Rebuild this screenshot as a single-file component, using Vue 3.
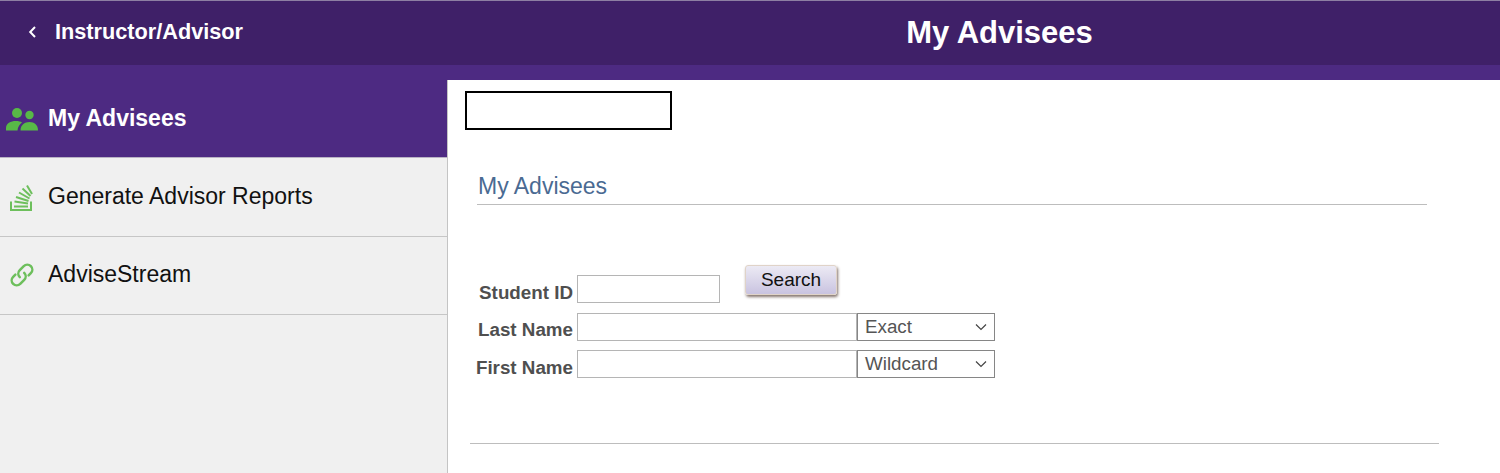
<script setup>
const navItems = [
  { label: 'My Advisees', icon: 'people', active: true },
  { label: 'Generate Advisor Reports', icon: 'stack', active: false },
  { label: 'AdviseStream', icon: 'link', active: false }
]
</script>

<template>
  <div class="page">
    <header class="topbar">
      <div class="back">
        <svg class="chev" viewBox="0 0 10 14" width="10" height="14"><path d="M8 2 L3.200 7 L8 12" fill="none" stroke="#fff" stroke-width="2"/></svg>
        <span>Instructor/Advisor</span>
      </div>
      <h1 class="title">My Advisees</h1>
    </header>
    <div class="body">
      <nav class="side">
        <div v-for="item in navItems" :key="item.label" class="nav-item" :class="{ active: item.active }">
          <svg v-if="item.icon === 'people'" class="ico" viewBox="0 0 32 26" width="32" height="26">
            <circle cx="11" cy="7" r="5" fill="#58b947"/>
            <circle cx="23.500" cy="9" r="4.200" fill="#58b947"/>
            <path d="M0 24.500 V22 C0 17.500 4.500 15 10 15 C12.500 15 14.500 15.500 16 16.500 C13.500 18.500 11.800 21 11.500 24.500 Z" fill="#58b947"/>
            <path d="M14.500 24.500 C14.500 19 18.500 16 23.500 16 C28.500 16 32 19 32 24.500 Z" fill="#58b947"/>
          </svg>
          <svg v-else-if="item.icon === 'stack'" class="ico" viewBox="0 0 32 28" width="32" height="28">
            <g fill="none" stroke="#6dbf5c" stroke-width="2">
              <path d="M3 18.500 V27 H23 V18.500"/>
              <path d="M6 23.500 H20"/>
              <path d="M6.500 18.500 L20 20.500"/>
              <path d="M8 14 L20.500 18"/>
              <path d="M11 9.500 L21.500 15.500"/>
              <path d="M14.500 5.500 L22.500 13"/>
              <path d="M19 2.500 L24 11"/>
            </g>
          </svg>
          <svg v-else class="ico" viewBox="0.8 0.8 25.6 22.4" width="32" height="28">
            <g transform="rotate(-45 12 12)" fill="none" stroke="#6dbf5c" stroke-width="2" stroke-linecap="round">
              <path d="M9.500 12 A4 4 0 0 1 13.500 8 H18 A4 4 0 0 1 18 16 H15.500"/>
              <path d="M14.500 12 A4 4 0 0 1 10.500 16 H6 A4 4 0 0 1 6 8 H8.500"/>
            </g>
          </svg>
          <span>{{ item.label }}</span>
        </div>
      </nav>
      <main class="content">
        <div class="band"></div>
        <div class="inner">
          <div class="redacted"></div>
          <div class="section-head">My Advisees</div>
          <form class="form" @submit.prevent>
            <div class="row first">
              <label>Student ID</label>
              <input class="input short" type="text" />
              <button class="search" type="button">Search</button>
            </div>
            <div class="row">
              <label>Last Name</label>
              <input class="input long" type="text" />
              <div class="sel"><span>Exact</span><svg viewBox="0 0 12 8" width="12" height="8"><path d="M1 1.500 L6 6.500 L11 1.500" fill="none" stroke="#444" stroke-width="1.200"/></svg></div>
            </div>
            <div class="row">
              <label>First Name</label>
              <input class="input long" type="text" />
              <div class="sel"><span>Wildcard</span><svg viewBox="0 0 12 8" width="12" height="8"><path d="M1 1.500 L6 6.500 L11 1.500" fill="none" stroke="#444" stroke-width="1.200"/></svg></div>
            </div>
          </form>
          <div class="sep"></div>
        </div>
      </main>
    </div>
  </div>
</template>

<style>
html, body { margin: 0; background: #fff; overflow: hidden; }
</style>

<style scoped>
.page {
  width: 1500px;
  height: 473px;
  overflow: hidden;
  font-family: "Liberation Sans", Arial, sans-serif;
  display: flex;
  flex-direction: column;
}
.topbar {
  height: 64px;
  flex: none;
  background: #3f2068;
  border-top: 1px solid #8d7fa3;
  display: flex;
  align-items: center;
  color: #fff;
}
.back {
  width: 447px;
  flex: none;
  padding: 0 0 2px 27px;
  box-sizing: border-box;
  display: flex;
  align-items: center;
  gap: 18px;
  font-size: 21.700px;
  font-weight: 700;
}
.title {
  margin: 0;
  flex: 1;
  text-align: center;
  font-size: 31px;
  font-weight: 700;
  transform: translateX(26px);
}
.body { flex: 1; display: flex; min-height: 0; }
.side {
  width: 447px;
  flex: none;
  background: #f0f0f0;
  display: flex;
  flex-direction: column;
}
.nav-item {
  height: 75px;
  padding-bottom: 2px;
  flex: none;
  border-bottom: 1px solid #c6c6c6;
  display: flex;
  align-items: center;
  padding-left: 8px;
  gap: 8px;
  font-size: 23px;
  color: #111;
}
.nav-item.active + .nav-item {
  height: 77px;
  padding-bottom: 1px;
}
.nav-item.active {
  height: 77px;
  padding-top: 15px;
  padding-bottom: 0;
  background: #4d2a82;
  color: #fff;
  font-weight: 700;
  padding-left: 6px;
  gap: 10px;
  border-bottom: 1px solid #b9b3c4;
}
.ico { flex: none; }
.content {
  flex: 1;
  display: flex;
  flex-direction: column;
  min-width: 0;
}
.band { height: 15px; background: #4d2a82; flex: none; }
.inner {
  flex: 1;
  background: #fff;
  border-left: 1px solid #c4c4c4;
  padding-top: 11px;
}
.redacted {
  width: 207px;
  height: 39px;
  box-sizing: border-box;
  border: 2px solid #000;
  margin-left: 17px;
}
.section-head {
  margin: 43px 0 0 29px;
  padding-left: 1px;
  width: 949px;
  height: 31px;
  border-bottom: 1px solid #bdbdbd;
  color: #4a6a92;
  font-size: 23px;
  line-height: 26px;
}
.form {
  margin-top: 70px;
  display: flex;
  flex-direction: column;
  gap: 9px;
}
.row {
  display: flex;
  align-items: flex-start;
  height: 28px;
}
.row label {
  width: 125px;
  flex: none;
  text-align: right;
  font-size: 18.800px;
  font-weight: 700;
  color: #4f4f4f;
  line-height: 34px;
  white-space: nowrap;
}
.row.first label { line-height: 35px; }
.row:last-child label { line-height: 35px; }
.row.first { height: 29px; }
.input {
  box-sizing: border-box;
  height: 28px;
  margin: 0 0 0 4px;
  border: 1px solid #b5b5b5;
  background: #fff;
  padding: 0;
  outline: none;
}
.short { width: 143px; }
.long { width: 280px; }
.search {
  box-sizing: border-box;
  width: 92px;
  height: 30px;
  margin: -10px 0 0 25px;
  padding: 0;
  border: 1px solid #e0d3c8;
  border-radius: 3px;
  background: linear-gradient(180deg, #eceaf4 0%, #c9c3e0 100%);
  box-shadow: 1px 2px 3px #85756e;
  font-family: "Liberation Sans", Arial, sans-serif;
  font-size: 19px;
  color: #111;
}
.sel {
  box-sizing: border-box;
  width: 138px;
  height: 28px;
  border: 1px solid #868686;
  display: flex;
  align-items: center;
  justify-content: space-between;
  padding: 0 7px;
  font-size: 18.800px;
  color: #555;
}
.sep {
  margin: 65px 0 0 22px;
  width: 969px;
  height: 1px;
  background: #bdbdbd;
}
</style>
